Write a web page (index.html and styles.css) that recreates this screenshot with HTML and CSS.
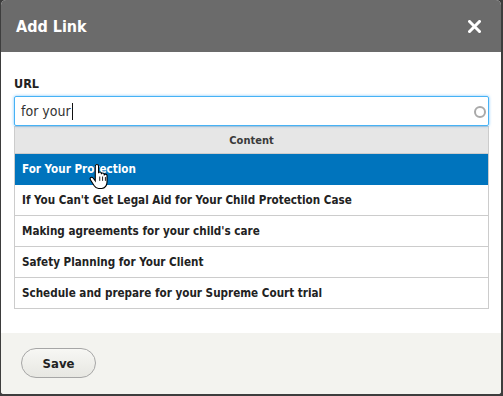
FILE: index.html
```html
<!DOCTYPE html>
<html>
<head>
<meta charset="utf-8">
<link rel="stylesheet" href="styles.css">
</head>
<body>
<div class="dialog">
  <div class="titlebar">
    <span class="title">Add Link</span>
    <svg class="close" width="13" height="13" viewBox="0 0 13 13"><path d="M1.5 1.5 L11.5 11.5 M11.5 1.5 L1.5 11.5" stroke="#fff" stroke-width="3" stroke-linecap="square"/></svg>
  </div>
  <div class="content">
    <div class="label">URL</div>
    <div class="input">
      <span class="value">for your</span><span class="caret"></span>
      <span class="throbber"></span>
    </div>
    <div class="ac">
      <div class="ac-head">Content</div>
      <div class="ac-row selected">For Your Protection</div>
      <div class="ac-row">If You Can't Get Legal Aid for Your Child Protection Case</div>
      <div class="ac-row">Making agreements for your child's care</div>
      <div class="ac-row">Safety Planning for Your Client</div>
      <div class="ac-row">Schedule and prepare for your Supreme Court trial</div>
    </div>
  </div>
  <div class="footer">
    <button class="save">Save</button>
  </div>
  <svg class="cursor" width="20" height="25" viewBox="0 0 18 23">
    <path d="M6 1.5 C6 0.7 6.7 0 7.5 0 C8.3 0 9 0.7 9 1.5 V8 C9 7.3 9.6 6.8 10.3 6.8 C11 6.8 11.6 7.3 11.6 8 V9 C11.6 8.3 12.2 7.8 12.9 7.8 C13.6 7.8 14.2 8.3 14.2 9 V10 C14.2 9.3 14.8 8.8 15.5 8.8 C16.2 8.8 16.8 9.3 16.8 10 V16 C16.8 19 15 22 12 22 H9 C7 22 6 21 5 19.5 L1.5 14 C1 13.2 1.2 12.3 1.9 11.9 C2.6 11.5 3.5 11.7 4 12.4 L6 15 Z" fill="#fff" stroke="#000" stroke-width="1" transform="translate(0.5 0.5)"/>
    <path d="M10.1 11 V15 M12.7 11 V15 M15.3 11.5 V15" stroke="#000" stroke-width="0.8" transform="translate(0.5 0.5)"/>
  </svg>
</div>
</body>
</html>
```
FILE: styles.css
```css
html, body {
  margin: 0;
  padding: 0;
}
body {
  background: #3d3d3d;
  width: 503px;
  height: 396px;
  overflow: hidden;
  font-family: "DejaVu Sans Condensed", "DejaVu Sans", sans-serif;
  font-stretch: condensed;
  color: #222;
}
.dialog {
  position: relative;
  margin: 0 2px 0 1px;
  width: 500px;
  height: 394px;
  border-radius: 5px 5px 3px 3px;
  overflow: hidden;
  background: #fff;
  display: flex;
  flex-direction: column;
}
.titlebar {
  height: 52px;
  flex: none;
  background: #6b6b6b;
  display: flex;
  align-items: center;
  justify-content: space-between;
  padding: 0 20px 0 15px;
}
.title {
  color: #fff;
  font-weight: bold;
  font-size: 16px;
  line-height: 19px;
}
.close {
  display: block;
  margin-top: 1px;
}
.content {
  flex: 1;
  padding: 24px 12px 0 13px;
}
.label {
  font-weight: bold;
  font-size: 12.5px;
  line-height: 15px;
  margin-bottom: 5px;
}
.input {
  position: relative;
  height: 28px;
  border: 1px solid #47b2f5;
  border-radius: 2px;
  box-shadow: 0 0 3px rgba(60, 170, 255, 0.7);
  display: flex;
  align-items: center;
  padding-left: 6px;
}
.value {
  font-size: 14px;
  color: #333;
  line-height: 16px;
}
.caret {
  width: 1px;
  height: 17px;
  background: #111;
  margin-left: 1px;
}
.throbber {
  position: absolute;
  right: 2px;
  top: 9px;
  width: 8px;
  height: 8px;
  border: 2px solid #a9a9a9;
  border-radius: 50%;
}
.ac {
  border: 1px solid #cccccc;
  border-bottom: none;
}
.ac-head {
  height: 26px;
  background: #e6e6e6;
  border-bottom: 1px solid #cccccc;
  display: flex;
  align-items: center;
  justify-content: center;
  font-weight: bold;
  font-size: 11px;
  color: #3a3a3a;
}
.ac-row {
  height: 30px;
  border-bottom: 1px solid #cccccc;
  display: flex;
  align-items: center;
  padding-left: 7px;
  font-weight: bold;
  font-size: 11.6px;
  color: #222;
}
.ac-row.selected {
  background: #0074bd;
  color: #fff;
  border-bottom-color: #0074bd;
}
.footer {
  height: 61px;
  flex: none;
  background: #f3f3ef;
  padding: 15px 0 0 20px;
  box-sizing: border-box;
}
.save {
  width: 75px;
  height: 30px;
  border: 1px solid #a6a6a6;
  border-radius: 15px;
  background: linear-gradient(#f7f7f4, #e7e7e2);
  font-family: inherit;
  font-stretch: condensed;
  font-weight: bold;
  font-size: 13px;
  color: #222;
  padding: 0;
}
.cursor {
  position: absolute;
  left: 87px;
  top: 164px;
}
```
